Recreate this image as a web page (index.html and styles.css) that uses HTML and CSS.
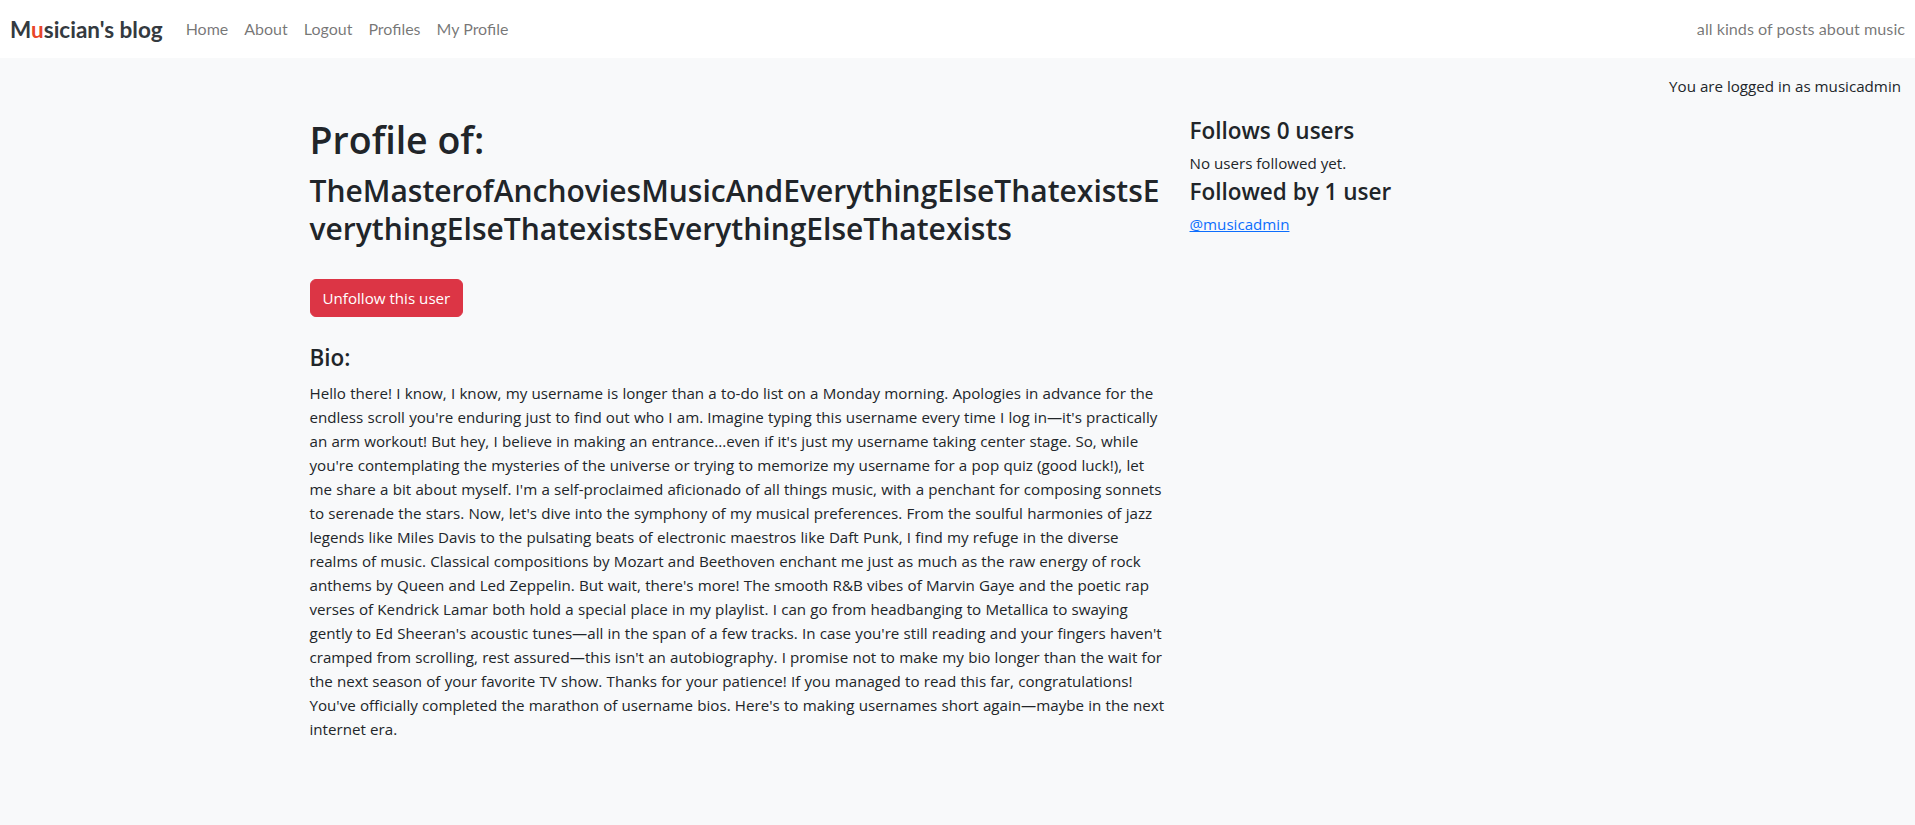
FILE: index.html
```html
<!DOCTYPE html>
<html lang="en">
<head>
<meta charset="utf-8">
<title>Musician's blog</title>
<link rel="stylesheet" href="styles.css">
</head>
<body>
<nav class="navbar">
  <div class="navbar-left">
    <a class="brand" href="#">M<span class="brand-accent">u</span>sician's blog</a>
    <ul class="nav-links">
      <li><a href="#">Home</a></li>
      <li><a href="#">About</a></li>
      <li><a href="#">Logout</a></li>
      <li><a href="#">Profiles</a></li>
      <li><a href="#">My Profile</a></li>
    </ul>
  </div>
  <span class="navbar-text">all kinds of posts about music</span>
</nav>
<div class="login-status">You are logged in as musicadmin</div>
<main class="container">
  <div class="row">
    <section class="col-main">
      <h1 class="profile-title">Profile of:</h1>
      <h2 class="username">TheMasterofAnchoviesMusicAndEverythingElseThatexistsEverythingElseThatexistsEverythingElseThatexists</h2>
      <form class="follow-form">
        <button type="button" class="btn-danger">Unfollow this user</button>
      </form>
      <h4 class="section-title">Bio:</h4>
      <p class="bio">Hello there! I know, I know, my username is longer than a to-do list on a Monday morning. Apologies in advance for the endless scroll you're enduring just to find out who I am. Imagine typing this username every time I log in—it's practically an arm workout! But hey, I believe in making an entrance...even if it's just my username taking center stage. So, while you're contemplating the mysteries of the universe or trying to memorize my username for a pop quiz (good luck!), let me share a bit about myself. I'm a self-proclaimed aficionado of all things music, with a penchant for composing sonnets to serenade the stars. Now, let's dive into the symphony of my musical preferences. From the soulful harmonies of jazz legends like Miles Davis to the pulsating beats of electronic maestros like Daft Punk, I find my refuge in the diverse realms of music. Classical compositions by Mozart and Beethoven enchant me just as much as the raw energy of rock anthems by Queen and Led Zeppelin. But wait, there's more! The smooth R&amp;B vibes of Marvin Gaye and the poetic rap verses of Kendrick Lamar both hold a special place in my playlist. I can go from headbanging to Metallica to swaying gently to Ed Sheeran's acoustic tunes—all in the span of a few tracks. In case you're still reading and your fingers haven't cramped from scrolling, rest assured—this isn't an autobiography. I promise not to make my bio longer than the wait for the next season of your favorite TV show. Thanks for your patience! If you managed to read this far, congratulations! You've officially completed the marathon of username bios. Here's to making usernames short again—maybe in the next internet era.</p>
    </section>
    <aside class="col-side">
      <h4 class="section-title follows-title">Follows 0 users</h4>
      <p class="side-note">No users followed yet.</p>
      <h4 class="section-title followers-title">Followed by 1 user</h4>
      <a class="user-link" href="#">@musicadmin</a>
    </aside>
  </div>
</main>
</body>
</html>
```

FILE: styles.css
```css
* {
  box-sizing: border-box;
}

html,
body {
  margin: 0;
}

body {
  font-family: "Open Sans", "Noto Sans", sans-serif;
  font-size: 15.15px;
  line-height: 24px;
  color: #212529;
  background: #f8f9fa;
}

.navbar {
  display: flex;
  align-items: center;
  justify-content: space-between;
  height: 58px;
  padding: 0 10px;
  background: #fff;
  font-family: Lato, "Open Sans", sans-serif;
}

.navbar-left {
  display: flex;
  align-items: center;
}

.brand {
  font-weight: 700;
  font-size: 22.5px;
  line-height: 33px;
  color: #343a40;
  text-decoration: none;
  margin-right: 15px;
}

.brand-accent {
  color: #e8462a;
}

.nav-links {
  display: flex;
  list-style: none;
  margin: 0;
  padding: 0;
}

.nav-links a {
  display: block;
  padding: 8px;
  font-size: 16px;
  line-height: 24px;
  color: rgba(0, 0, 0, 0.55);
  text-decoration: none;
}

.navbar-text {
  font-size: 16.2px;
  line-height: 24px;
  color: rgba(0, 0, 0, 0.55);
}

.login-status {
  text-align: right;
  padding: 16px 14px 0;
  margin-bottom: 16px;
}

.container {
  width: 1320px;
  margin: 0 auto;
  padding: 0 12px;
}

.row {
  display: grid;
  grid-template-columns: 856px 416px;
  column-gap: 24px;
}

.profile-title {
  margin: 0 0 8px;
  padding-top: 2px;
  font-size: 37.5px;
  line-height: 48px;
  font-weight: 600;
}

.username {
  margin: 0 0 8px;
  font-size: 30px;
  line-height: 38.4px;
  font-weight: 600;
  overflow-wrap: anywhere;
}

.follow-form {
  margin: 30px 0 27.5px;
}

.btn-danger {
  font-family: inherit;
  font-size: 15.15px;
  line-height: 24px;
  padding: 6px 12px;
  color: #fff;
  background: #dc3545;
  border: 1px solid #dc3545;
  border-radius: 6px;
}

.section-title {
  margin: 0 0 8px;
  font-size: 22.5px;
  line-height: 28.8px;
  font-weight: 600;
}

.follows-title {
  padding-top: 3.3px;
  margin-bottom: 5.4px;
}

.followers-title {
  padding-top: 2.5px;
  margin-bottom: 5.5px;
}

.bio {
  margin: 0;
  word-spacing: 0.3px;
}

.side-note {
  margin: 0;
}

.user-link {
  color: #0d6efd;
}
```
